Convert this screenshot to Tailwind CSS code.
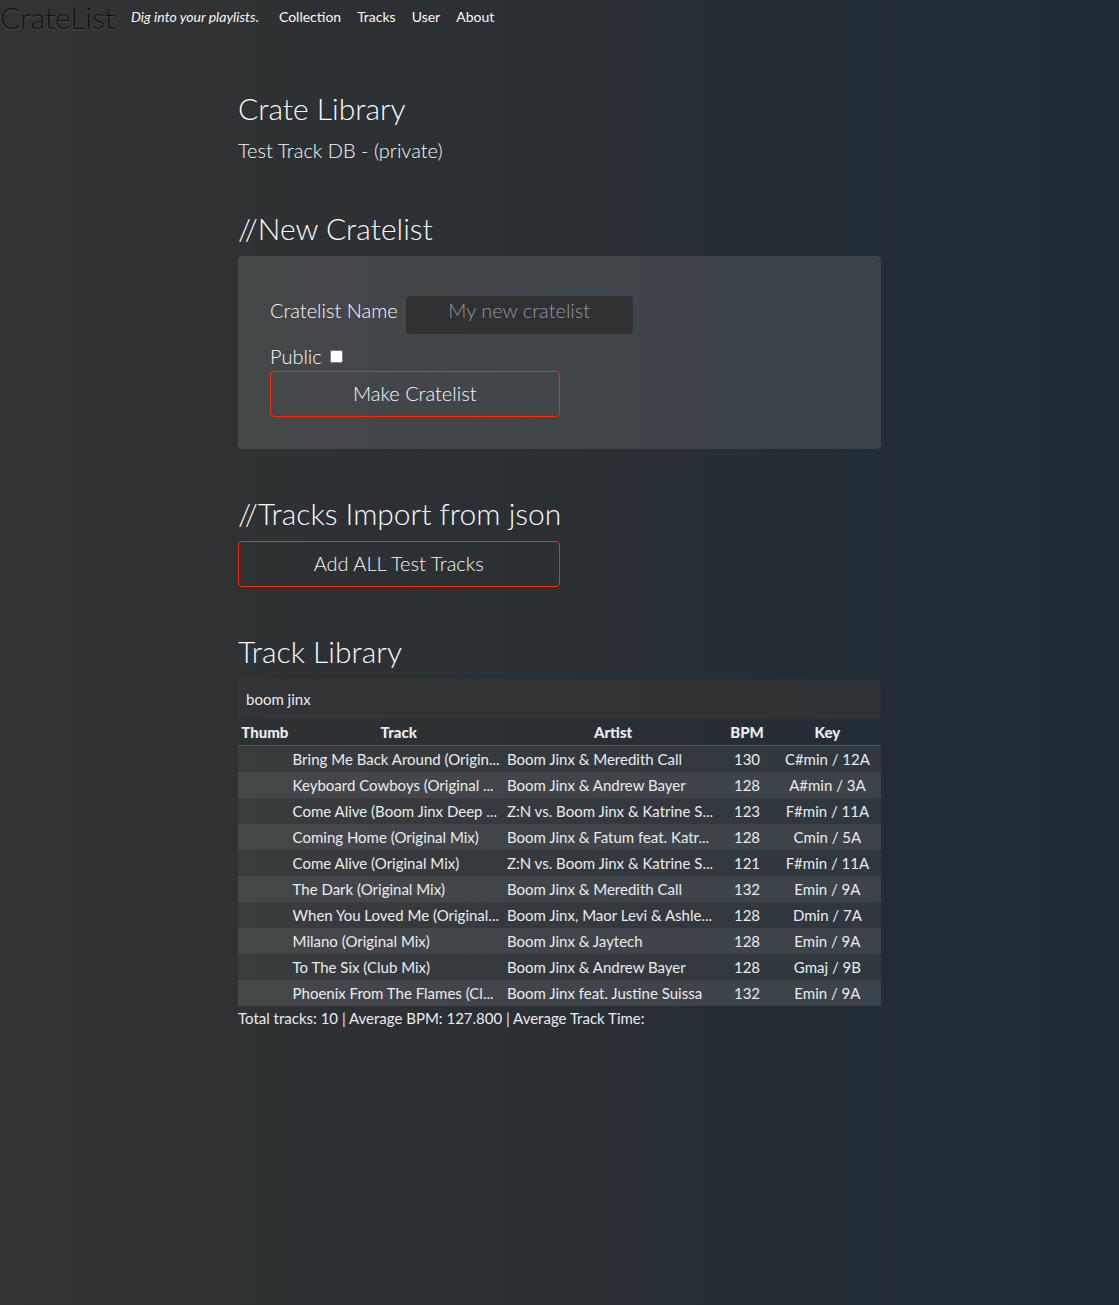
<!DOCTYPE html>
<html lang="en">
<head>
<meta charset="utf-8">
<meta name="viewport" content="width=device-width, initial-scale=1">
<title>CrateList</title>
<script src="https://cdn.jsdelivr.net/npm/@tailwindcss/browser@4"></script>
</head>
<body class="min-h-screen bg-linear-to-r from-[#333332] to-[#1f2b35] bg-fixed font-['Lato',sans-serif] text-[15px] text-[#e9ecef]">
<nav class="flex h-[34px] items-center gap-4 text-sm text-[#f8f9fa]">
  <a href="#" class="text-[30px] leading-8 font-light text-[#101010] text-shadow-[0_1px_2px_rgb(255_255_255/0.15)]">CrateList</a>
  <em class="mr-1">Dig into your playlists.</em>
  <a href="#">Collection</a>
  <a href="#">Tracks</a>
  <a href="#">User</a>
  <a href="#">About</a>
</nav>
<main class="mx-auto mt-[50px] flex max-w-[643px] flex-col gap-10 pb-16">
  <section>
    <h2 class="pb-1 text-[30px] leading-[48px] font-light text-[#f8f9fa]">Crate Library</h2>
    <p class="text-xl leading-7 font-light text-[#f8f9fa]"><a href="#">Test Track DB - (private)</a></p>
  </section>
  <section>
    <h2 class="pb-1 text-[30px] leading-[48px] font-light text-[#f8f9fa]">//New Cratelist</h2>
    <form class="rounded bg-white/11 px-8 pt-10 pb-8 text-xl font-light text-[#f8f9fa]">
      <div class="flex gap-2">
        <label for="name" class="leading-7">Cratelist Name</label>
        <input id="name" type="text" placeholder="My new cratelist" class="h-[38px] w-[227px] rounded bg-[#2f3133] px-2 pb-2.5 text-center leading-7 placeholder:text-[#9499a4]">
      </div>
      <div class="mt-2 flex items-center gap-2 leading-[29px]">
        <label for="public">Public</label>
        <input id="public" type="checkbox" class="size-[13px]">
      </div>
      <button type="submit" class="block h-[46px] w-1/2 rounded border border-[#ff2a00] pb-0.5">Make Cratelist</button>
    </form>
  </section>
  <section>
    <h2 class="pb-1 text-[30px] leading-[48px] font-light text-[#f8f9fa]">//Tracks Import from json</h2>
    <button type="button" class="block h-[46px] w-1/2 rounded border border-[#ff2a00] pb-0.5 text-xl font-light text-[#f8f9fa]">Add ALL Test Tracks</button>
  </section>
  <section>
    <h2 class="pb-1 text-[30px] leading-[48px] font-light text-[#f8f9fa]">Track Library</h2>
    <input type="text" aria-label="Search tracks" value="boom jinx" class="block h-10 w-full rounded-t bg-[#353434]/70 px-2">
    <table class="w-full table-fixed border-collapse leading-[26px]">
      <thead>
        <tr class="h-[26px] border-b border-[#e0115f]">
          <th class="w-1/12 p-0 font-black">Thumb</th>
          <th class="w-4/12 p-0 font-black">Track</th>
          <th class="w-4/12 p-0 font-black">Artist</th>
          <th class="w-1/12 p-0 font-black">BPM</th>
          <th class="w-2/12 p-0 font-black">Key</th>
        </tr>
      </thead>
      <tbody id="tracks"></tbody>
    </table>
    <p class="leading-6">Total tracks: 10 | Average BPM: 127.800 | Average Track Time:</p>
  </section>
</main>
<script>
const tracks = [
  ['Bring Me Back Around (Origin...', 'Boom Jinx & Meredith Call', '130', 'C#min / 12A'],
  ['Keyboard Cowboys (Original ...', 'Boom Jinx & Andrew Bayer', '128', 'A#min / 3A'],
  ['Come Alive (Boom Jinx Deep ...', 'Z:N vs. Boom Jinx & Katrine S...', '123', 'F#min / 11A'],
  ['Coming Home (Original Mix)', 'Boom Jinx & Fatum feat. Katr...', '128', 'Cmin / 5A'],
  ['Come Alive (Original Mix)', 'Z:N vs. Boom Jinx & Katrine S...', '121', 'F#min / 11A'],
  ['The Dark (Original Mix)', 'Boom Jinx & Meredith Call', '132', 'Emin / 9A'],
  ['When You Loved Me (Original...', 'Boom Jinx, Maor Levi & Ashle...', '128', 'Dmin / 7A'],
  ['Milano (Original Mix)', 'Boom Jinx & Jaytech', '128', 'Emin / 9A'],
  ['To The Six (Club Mix)', 'Boom Jinx & Andrew Bayer', '128', 'Gmaj / 9B'],
  ['Phoenix From The Flames (Cl...', 'Boom Jinx feat. Justine Suissa', '132', 'Emin / 9A'],
];
const body = document.getElementById('tracks');
for (const track of tracks) {
  const row = body.insertRow();
  row.className = 'odd:bg-white/5 even:bg-white/11';
  row.insertCell();
  track.forEach((text, i) => {
    const cell = row.insertCell();
    cell.textContent = text;
    cell.className = i < 2 ? 'pl-px whitespace-nowrap' : 'text-center';
  });
}
</script>
</body>
</html>
